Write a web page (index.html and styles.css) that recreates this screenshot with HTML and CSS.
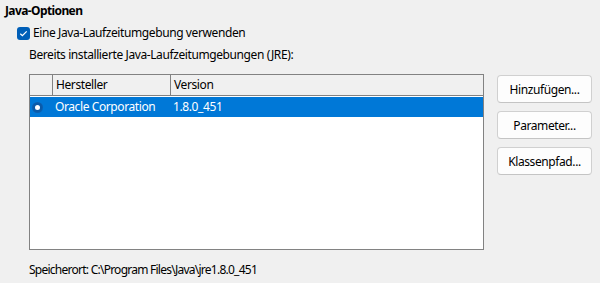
FILE: index.html
```html
<!DOCTYPE html>
<html lang="de">
<head>
<meta charset="utf-8">
<link rel="stylesheet" href="styles.css">
</head>
<body>
<div class="page">
  <div class="title">Java-Optionen</div>
  <div class="opts">
    <div class="check-row">
      <span class="checkbox"><svg width="13" height="13" viewBox="0 0 13 13"><path d="M3.3 6.7 L5.4 8.7 L9.7 4.3" fill="none" stroke="#fff" stroke-width="1.2"/></svg></span>
      <span class="check-label">Eine Java-Laufzeitumgebung verwenden</span>
    </div>
    <div class="inner">
      <div class="jre-label">Bereits installierte Java-Laufzeitumgebungen (JRE):</div>
      <div class="main">
        <div class="table">
          <div class="thead">
            <div class="cell c1"></div>
            <div class="cell c2">Hersteller</div>
            <div class="cell c3">Version</div>
          </div>
          <div class="row selected">
            <div class="cell c1"><span class="radio"></span></div>
            <div class="cell c2">Oracle Corporation</div>
            <div class="cell c3">1.8.0_451</div>
          </div>
        </div>
        <div class="buttons">
          <button class="btn">Hinzufügen...</button>
          <button class="btn">Parameter...</button>
          <button class="btn">Klassenpfad...</button>
        </div>
      </div>
      <div class="location">Speicherort: C:\Program Files\Java\jre1.8.0_451</div>
    </div>
  </div>
</div>
</body>
</html>
```
FILE: styles.css
```css
html, body {
  margin: 0;
  padding: 0;
  background: #f0f0f0;
}
body {
  font-family: "Noto Sans", "Open Sans", sans-serif;
  font-size: 12px;
  letter-spacing: -0.4px;
  color: #000;
  width: 600px;
  height: 283px;
  overflow: hidden;
}
.page {
  padding: 3px 0 0 5px;
}
.title {
  font-weight: bold;
  letter-spacing: -0.6px;
  line-height: 16px;
  height: 16px;
}
.opts {
  padding-left: 12px;
}
.check-row {
  display: flex;
  align-items: center;
  gap: 3px;
  margin-top: 6px;
  height: 16px;
}
.checkbox {
  width: 13px;
  height: 13px;
  border-radius: 3px;
  background: #005fb8;
  display: block;
}
.checkbox svg {
  display: block;
}
.check-label {
  line-height: 16px;
}
.inner {
  padding-left: 12px;
}
.jre-label {
  margin-top: 6px;
  line-height: 16px;
  height: 16px;
}
.main {
  display: flex;
  gap: 13px;
  margin-top: 11px;
}
.table {
  width: 453px;
  height: 174px;
  border: 1px solid #828282;
  background: #fff;
}
.thead, .row {
  display: grid;
  grid-template-columns: 23px 118px 1fr;
}
.thead {
  height: 20px;
  background: #f0f0f0;
  border-bottom: 1px solid #828282;
}
.thead .cell {
  line-height: 20px;
  padding-left: 3px;
}
.thead .c1, .thead .c2 {
  border-right: 1px solid #828282;
}
.row {
  height: 20px;
  margin-top: 1px;
}
.row .cell {
  line-height: 20px;
  padding-left: 2px;
}
.row.selected {
  background: #0078d7;
  color: #fff;
}
.row .c1 {
  display: flex;
  align-items: center;
  padding-left: 3px;
}
.radio {
  width: 9px;
  height: 9px;
  border-radius: 50%;
  background: #fff;
  border: 2px solid #0a5aa8;
  box-sizing: border-box;
  box-shadow: 0 0 0 1px #0b5fb0;
}
.buttons {
  display: flex;
  flex-direction: column;
  gap: 8px;
  margin-top: 1px;
}
.btn {
  width: 95px;
  height: 28px;
  border: 1px solid #d0d0d0;
  border-bottom-color: #c4c4c4;
  border-radius: 4px;
  background: #fdfdfd;
  font-family: inherit;
  font-size: 12px;
  letter-spacing: -0.4px;
  color: #000;
  padding: 0;
}
.location {
  margin-top: 12px;
  line-height: 16px;
  letter-spacing: -0.75px;
}
```
